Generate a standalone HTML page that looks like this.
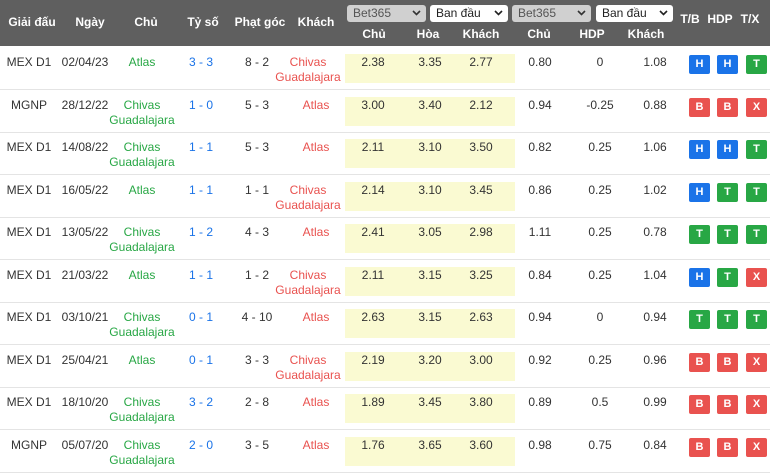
<!DOCTYPE html>
<html><head><meta charset="utf-8"><style>
*{margin:0;padding:0;box-sizing:border-box}
body{width:770px;height:471px;overflow:hidden;background:#fff;font-family:"Liberation Sans","Noto Sans CJK SC",sans-serif;font-size:12px;color:#333;position:relative}
.hd{position:absolute;left:0;top:0;width:770px;height:46px;background:#5f5f5f}
.ht{position:absolute;color:#fff;font-weight:bold;font-size:12px;transform:translateX(-50%);white-space:nowrap}
.sel{position:absolute;top:5px;height:17px;border-radius:3px;font-size:12px;padding-left:6px;line-height:17px}
.sel svg{position:absolute;right:5px;top:5px}
.row{position:absolute;left:0;width:770px;height:43px;border-bottom:1px solid #e4e4e4}
.c{position:absolute;top:8px;transform:translateX(-50%);text-align:center;white-space:nowrap;line-height:15px}
.y{position:absolute;left:345px;width:170px;top:7px;height:29px;background:#fafad2}
.b{position:absolute;top:8px;width:21px;height:19px;border-radius:2px;color:#fff;font-weight:bold;font-size:11px;text-align:center;line-height:19px}
.H{background:#1a73e8}.T{background:#28a745}.B,.X{background:#e9524f}
.g{color:#28a745}.r{color:#e9524f}.bl{color:#1a73e8}
</style></head><body>
<div class="hd"></div>
<div class="ht" style="left:32px;top:15px">Giải đấu</div>
<div class="ht" style="left:90px;top:15px">Ngày</div>
<div class="ht" style="left:146px;top:15px">Chủ</div>
<div class="ht" style="left:203px;top:15px">Tỷ số</div>
<div class="ht" style="left:260px;top:15px">Phạt góc</div>
<div class="ht" style="left:316px;top:15px">Khách</div>
<div class="ht" style="left:374px;top:27px">Chủ</div>
<div class="ht" style="left:428px;top:27px">Hòa</div>
<div class="ht" style="left:481px;top:27px">Khách</div>
<div class="ht" style="left:539px;top:27px">Chủ</div>
<div class="ht" style="left:592px;top:27px">HDP</div>
<div class="ht" style="left:646px;top:27px">Khách</div>
<div class="ht" style="left:690px;top:12px">T/B</div>
<div class="ht" style="left:720px;top:12px">HDP</div>
<div class="ht" style="left:750px;top:12px">T/X</div>
<div class="sel" style="left:347px;width:79px;background:#d0d0d0;color:#555">Bet365<svg width="9" height="6"><path d="M1 1l3.5 3.5L8 1" stroke="#333" stroke-width="1.6" fill="none"/></svg></div>
<div class="sel" style="left:430px;width:78px;background:#fff;color:#222">Ban đầu<svg width="9" height="6"><path d="M1 1l3.5 3.5L8 1" stroke="#222" stroke-width="1.6" fill="none"/></svg></div>
<div class="sel" style="left:512px;width:79px;background:#d0d0d0;color:#555">Bet365<svg width="9" height="6"><path d="M1 1l3.5 3.5L8 1" stroke="#333" stroke-width="1.6" fill="none"/></svg></div>
<div class="sel" style="left:596px;width:77px;background:#fff;color:#222">Ban đầu<svg width="9" height="6"><path d="M1 1l3.5 3.5L8 1" stroke="#222" stroke-width="1.6" fill="none"/></svg></div>
<div id="rows"></div>
<script>
var d=[
["MEX D1","02/04/23","A","3 - 3","8 - 2","2.38","3.35","2.77","0.80","0","1.08","HHT"],
["MGNP","28/12/22","C","1 - 0","5 - 3","3.00","3.40","2.12","0.94","-0.25","0.88","BBX"],
["MEX D1","14/08/22","C","1 - 1","5 - 3","2.11","3.10","3.50","0.82","0.25","1.06","HHT"],
["MEX D1","16/05/22","A","1 - 1","1 - 1","2.14","3.10","3.45","0.86","0.25","1.02","HTT"],
["MEX D1","13/05/22","C","1 - 2","4 - 3","2.41","3.05","2.98","1.11","0.25","0.78","TTT"],
["MEX D1","21/03/22","A","1 - 1","1 - 2","2.11","3.15","3.25","0.84","0.25","1.04","HTX"],
["MEX D1","03/10/21","C","0 - 1","4 - 10","2.63","3.15","2.63","0.94","0","0.94","TTT"],
["MEX D1","25/04/21","A","0 - 1","3 - 3","2.19","3.20","3.00","0.92","0.25","0.96","BBX"],
["MEX D1","18/10/20","C","3 - 2","2 - 8","1.89","3.45","3.80","0.89","0.5","0.99","BBX"],
["MGNP","05/07/20","C","2 - 0","3 - 5","1.76","3.65","3.60","0.98","0.75","0.84","BBX"]];
var h="";
d.forEach(function(r,i){
var top=47+i*42.5;
var home=r[2]=="A"?'<div class="c g" style="left:142px">Atlas</div>':'<div class="c g" style="left:142px">Chivas<br>Guadalajara</div>';
var away=r[2]=="A"?'<div class="c r" style="left:308px">Chivas<br>Guadalajara</div>':'<div class="c r" style="left:316px">Atlas</div>';
h+='<div class="row" style="top:'+top+'px"><div class="y"></div>'+
'<div class="c" style="left:29px">'+r[0]+'</div><div class="c" style="left:85px">'+r[1]+'</div>'+home+
'<div class="c bl" style="left:201px">'+r[3]+'</div><div class="c" style="left:257px">'+r[4]+'</div>'+away+
'<div class="c" style="left:373px">'+r[5]+'</div><div class="c" style="left:430px">'+r[6]+'</div><div class="c" style="left:481px">'+r[7]+'</div>'+
'<div class="c" style="left:540px">'+r[8]+'</div><div class="c" style="left:600px">'+r[9]+'</div><div class="c" style="left:655px">'+r[10]+'</div>';
var xs=[689,717,746];
for(var k=0;k<3;k++){var ch=r[11][k];h+='<div class="b '+ch+'" style="left:'+xs[k]+'px">'+ch+'</div>';}
h+='</div>';});
document.getElementById("rows").innerHTML=h;
</script>
</body></html>
